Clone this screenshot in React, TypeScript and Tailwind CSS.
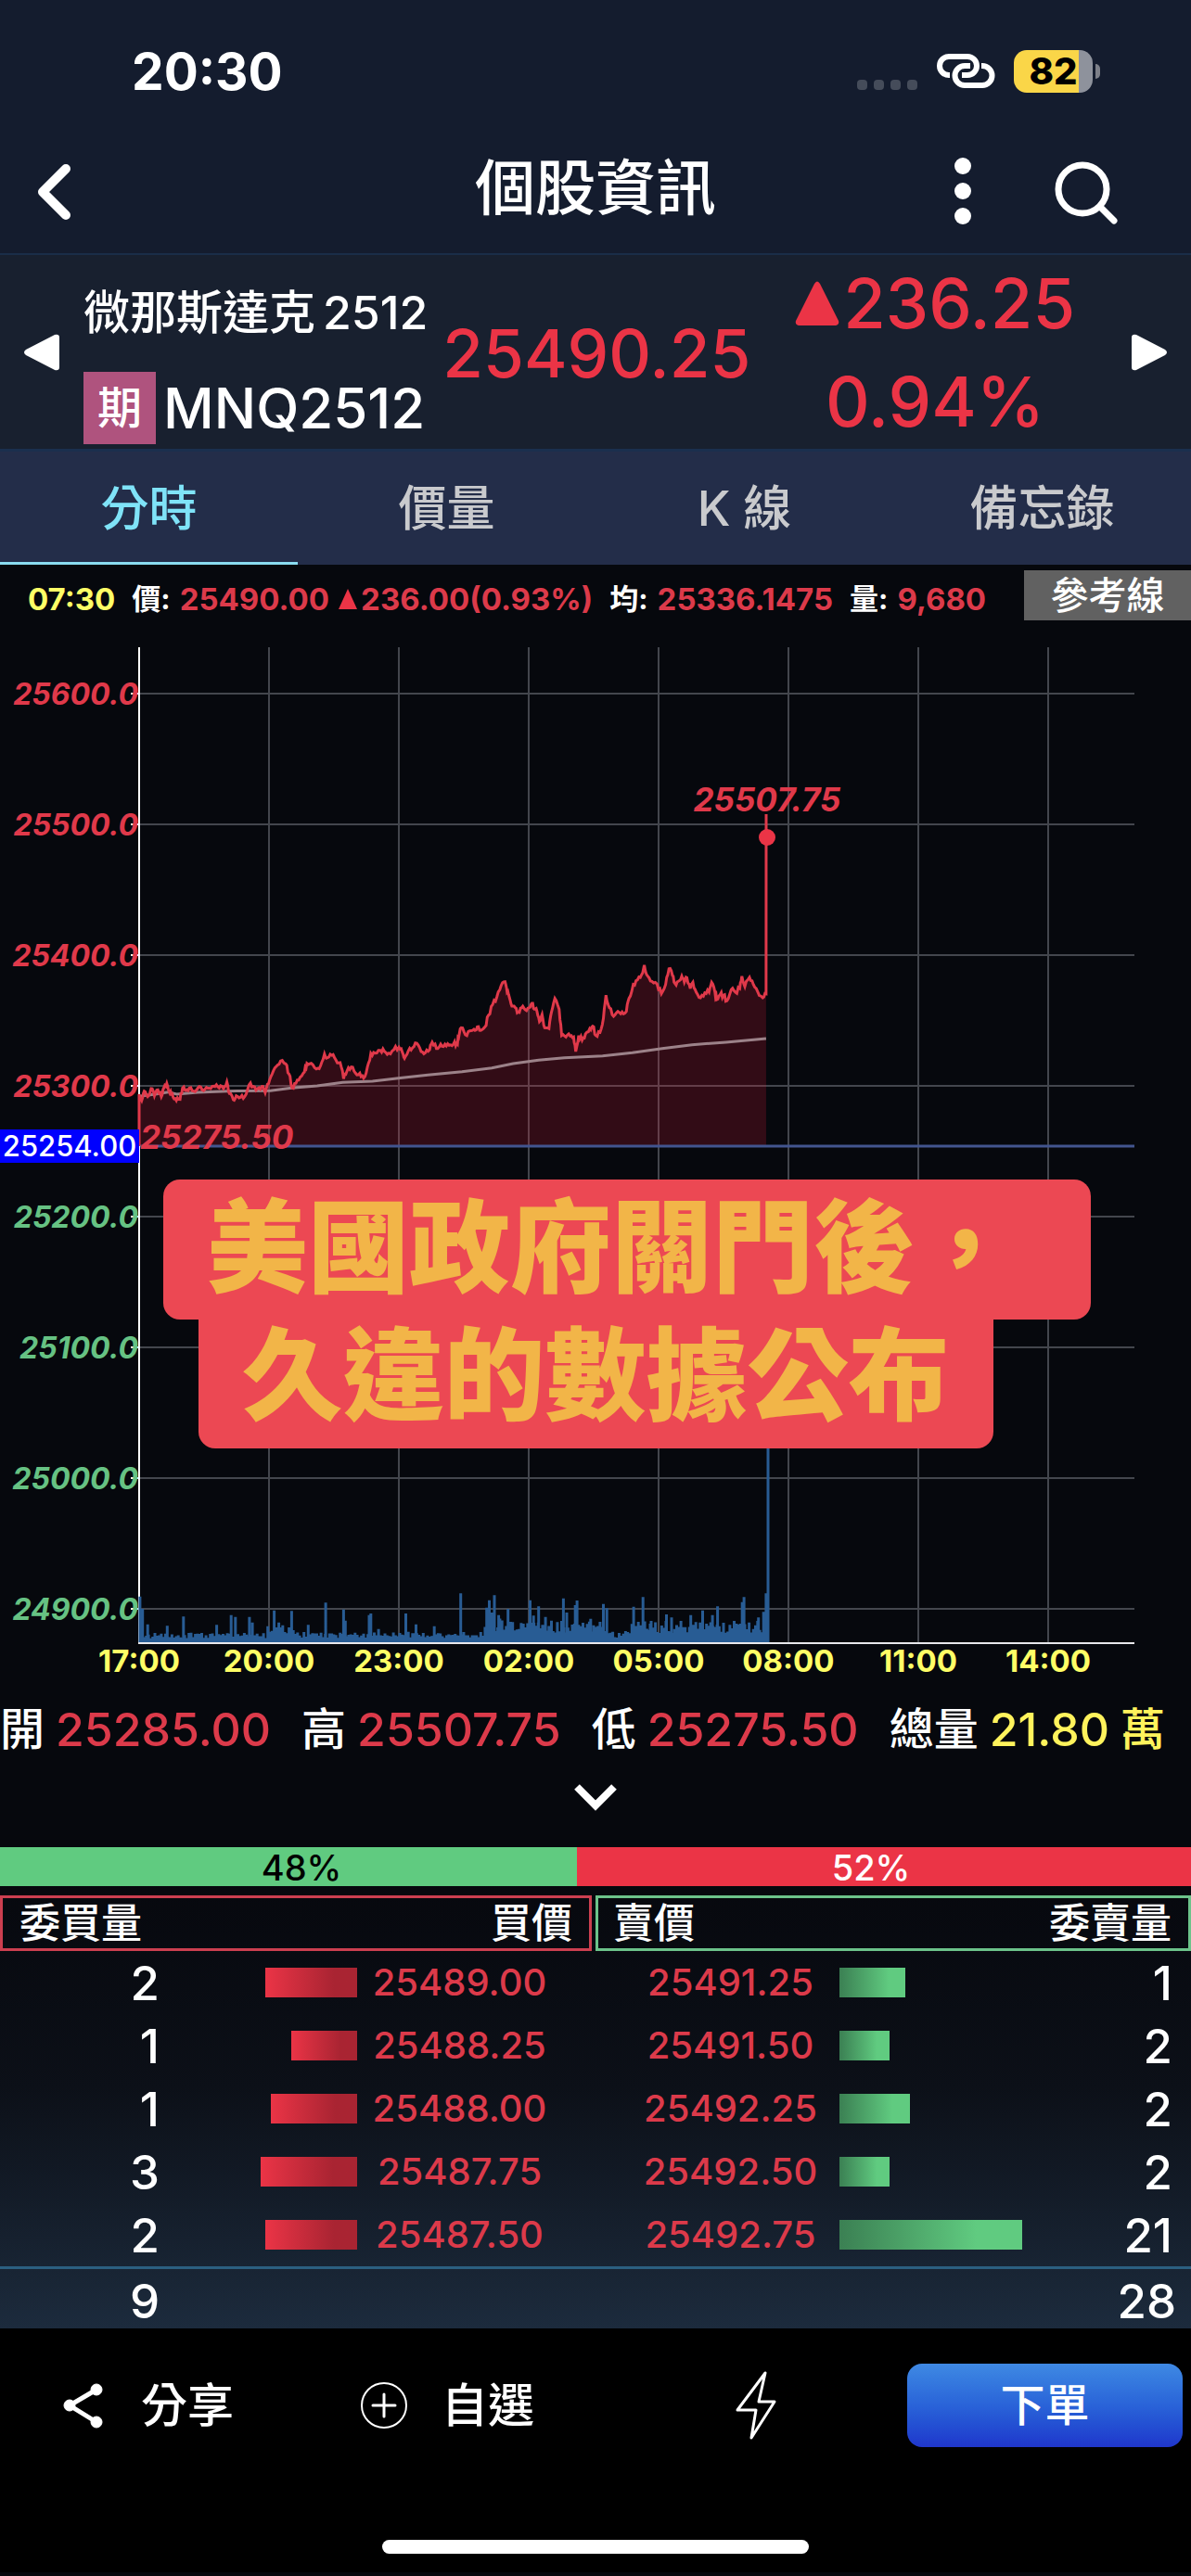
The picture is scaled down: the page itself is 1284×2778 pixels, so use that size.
import type { ReactNode } from "react";

// x: ticks since the open, y: chart level (three per pixel, downwards)
const priceTicks: [number, number][] = [
  [0, 480], [6, 500], [12, 470], [20, 488], [28, 462], [36, 485], [44, 466], [52, 488], [58, 460], [65, 445],
  [70, 470], [76, 480], [82, 495], [90, 492], [96, 497], [102, 460], [110, 468], [118, 460], [128, 470], [138, 460],
  [148, 466], [158, 458], [168, 462], [178, 455], [188, 460], [198, 462], [206, 440], [212, 478], [221, 498], [228, 485],
  [238, 490], [248, 487], [258, 450], [268, 455], [278, 462], [288, 455], [296, 475], [304, 445], [312, 415], [322, 390],
  [332, 373], [344, 382], [352, 415], [359, 460], [368, 445], [378, 425], [388, 408], [394, 380], [404, 380], [416, 398],
  [426, 388], [435, 350], [442, 362], [452, 354], [462, 370], [472, 378], [480, 430], [488, 405], [498, 392], [508, 412],
  [518, 412], [527, 428], [536, 392], [544, 348], [554, 347], [566, 338], [576, 342], [586, 347], [598, 336], [610, 328],
  [618, 345], [623, 364], [632, 340], [642, 330], [652, 315], [662, 342], [672, 346], [682, 336], [688, 312], [698, 332],
  [708, 318], [718, 318], [728, 322], [738, 318], [746, 315], [750, 298], [756, 265], [766, 288], [776, 275], [786, 270],
  [794, 262], [802, 274], [812, 262], [820, 225], [830, 190], [840, 165], [850, 128], [859, 116], [864, 150], [869, 165],
  [875, 195], [883, 200], [890, 214], [898, 200], [906, 206], [916, 200], [922, 186], [928, 205], [934, 212], [940, 245],
  [946, 222], [952, 265], [962, 268], [968, 215], [976, 170], [986, 205], [992, 290], [1002, 295], [1012, 292], [1020, 295],
  [1025, 342], [1032, 290], [1040, 305], [1048, 285], [1058, 268], [1065, 260], [1072, 290], [1082, 280], [1090, 235], [1096, 160],
  [1104, 200], [1114, 228], [1124, 212], [1134, 214], [1144, 212], [1150, 170], [1160, 125], [1170, 110], [1180, 92], [1186, 62],
  [1194, 98], [1204, 115], [1216, 124], [1226, 155], [1236, 125], [1244, 74], [1252, 95], [1258, 122], [1266, 115], [1274, 98],
  [1280, 118], [1286, 103], [1294, 138], [1300, 118], [1308, 150], [1318, 168], [1328, 152], [1338, 150], [1344, 118], [1352, 150],
  [1356, 174], [1364, 158], [1372, 160], [1380, 178], [1390, 142], [1400, 150], [1410, 138], [1415, 98], [1422, 132], [1433, 102],
  [1442, 125], [1452, 148], [1464, 168], [1472, 155],
];

const averageTicks: [number, number][] = [
  [0, 487], [38, 480], [68, 473], [88, 480], [138, 474], [208, 470], [308, 469], [358, 460], [418, 453], [478, 442],
  [548, 438], [618, 427], [678, 418], [758, 407], [828, 395], [878, 381], [938, 370], [998, 362], [1088, 356], [1158, 346],
  [1228, 332], [1298, 320], [1378, 312], [1472, 300],
];

// single busy minutes: [tick, height]
const volumePeaks: [number, number][] = [
  [2, 148], [8, 108], [20, 58], [66, 53], [104, 83], [182, 56], [216, 88], [226, 82], [259, 82], [266, 64],
  [317, 103], [328, 64], [358, 101], [397, 56], [438, 128], [480, 106], [484, 70], [540, 88], [544, 93], [562, 43],
  [626, 93], [650, 58], [693, 52], [755, 158], [816, 112], [822, 136], [828, 96], [834, 152], [844, 88], [866, 108],
  [897, 62], [918, 136], [926, 86], [938, 116], [954, 82], [968, 70], [996, 142], [1004, 96], [1024, 120], [1028, 135],
  [1060, 76], [1090, 124], [1098, 110], [1161, 115], [1183, 146], [1200, 60], [1238, 90], [1250, 80], [1295, 88], [1323, 103],
  [1346, 88], [1358, 116], [1408, 58], [1416, 130], [1420, 146], [1454, 80], [1466, 98], [1472, 158],
];

const AXIS_X = 150;
const BASE_Y = 1771;
const tickX = (t: number) => AXIS_X + t * 0.4592;
const levelY = (l: number) => 1020 + l / 3;
const noise = (n: number) => {
  const v = Math.sin(n * 12.9898) * 43758.5453;
  return v - Math.floor(v);
};

function jagged(points: [number, number][]) {
  const out: string[] = [];
  points.forEach(([t, l], i) => {
    out.push(`${tickX(t).toFixed(1)},${levelY(l).toFixed(1)}`);
    const next = points[i + 1];
    if (!next) return;
    for (const f of [0.33, 0.66]) {
      const x = t + (next[0] - t) * f;
      const y = l + (next[1] - l) * f + (noise(i + f) - 0.5) * 16;
      out.push(`${tickX(x).toFixed(1)},${levelY(y).toFixed(1)}`);
    }
  });
  return out.join(" ");
}

function volumeFloor(t: number) {
  if (t < 300) return 26;
  if (t < 370) return 46;
  if (t < 810) return 28;
  if (t < 890) return 66;
  if (t < 1095) return 58;
  if (t < 1140) return 28;
  return 58;
}

function volumePath() {
  let d = "";
  const bar = (t: number, h: number) => {
    d += `M${tickX(t).toFixed(1)} ${BASE_Y}v-${(h / 3).toFixed(1)}`;
  };
  for (let t = 2; t <= 1472; t += 5) {
    bar(t, volumeFloor(t) * (0.5 + noise(t) * 0.7));
  }
  volumePeaks.forEach(([t, h]) => bar(t, h));
  return d;
}

const priceLine = jagged(priceTicks);
const averageLine = averageTicks.map(([t, l]) => `${tickX(t)},${levelY(l)}`).join(" ");

const yLabels = [
  { y: 748, text: "25600.0", up: true },
  { y: 889, text: "25500.0", up: true },
  { y: 1030, text: "25400.0", up: true },
  { y: 1171, text: "25300.0", up: true },
  { y: 1312, text: "25200.0", up: false },
  { y: 1453, text: "25100.0", up: false },
  { y: 1594, text: "25000.0", up: false },
  { y: 1735, text: "24900.0", up: false },
];

const xLabels = ["17:00", "20:00", "23:00", "02:00", "05:00", "08:00", "11:00", "14:00"];

const tabs = ["分時", "價量", "K 線", "備忘錄"];

const orders = [
  { buyQty: 2, buyBar: 99, buy: "25489.00", sell: "25491.25", sellBar: 71, sellQty: 1 },
  { buyQty: 1, buyBar: 71, buy: "25488.25", sell: "25491.50", sellBar: 54, sellQty: 2 },
  { buyQty: 1, buyBar: 93, buy: "25488.00", sell: "25492.25", sellBar: 76, sellQty: 2 },
  { buyQty: 3, buyBar: 104, buy: "25487.75", sell: "25492.50", sellBar: 54, sellQty: 2 },
  { buyQty: 2, buyBar: 99, buy: "25487.50", sell: "25492.75", sellBar: 197, sellQty: 21 },
];

function StatusBar() {
  return (
    <div className="flex h-[150px] items-center justify-between pt-1 pr-[98px] pl-[142px]">
      <span className="text-[55px] leading-none font-bold">20:30</span>
      <div className="flex items-center">
        <div className="mt-7 mr-5 flex gap-[7px]">
          {[0, 1, 2, 3].map((i) => (
            <span key={i} className="size-[11px] rounded-[4px] bg-[#454c5a]" />
          ))}
        </div>
        <svg width="64" height="42" viewBox="0 0 64 42" fill="none" stroke="#fff" strokeWidth="6" className="mr-5">
          <path d="M15 25h-1a10 10 0 0 1 0-20h20a10 10 0 0 1 0 20h-6" />
          <path d="M49 15h1a10.500 10.500 0 0 1 0 21H31a10.500 10.500 0 0 1 0-21h6" />
        </svg>
        <div className="flex h-[46px] w-[85px] items-center justify-center rounded-[14px] bg-linear-to-r from-[#fad648] from-82% to-[#8e929c] to-82%">
          <span className="text-[40px] leading-[46px] font-extrabold text-black">82</span>
        </div>
        <span className="ml-[3px] h-4 w-[5px] rounded-r-full bg-[#7d8089]" />
      </div>
    </div>
  );
}

function TitleBar() {
  return (
    <header className="grid h-[125px] grid-cols-[1fr_auto_1fr] items-start border-b-2 border-[#1a2d48] px-9">
      <button type="button" aria-label="返回" className="mt-6 justify-self-start">
        <svg width="44" height="66" viewBox="0 0 44 66" fill="none" stroke="#fff" strokeWidth="10" strokeLinecap="round" strokeLinejoin="round">
          <path d="M35 8L10 33l25 25" />
        </svg>
      </button>
      <h1 className="mt-2 text-[65px] leading-[90px] font-medium">個股資訊</h1>
      <div className="mt-[18px] flex items-center gap-[88px] justify-self-end pr-10">
        <button type="button" aria-label="更多">
          <svg width="20" height="76" viewBox="0 0 20 76" fill="#fff">
            <circle cx="10" cy="11" r="9" />
            <circle cx="10" cy="38" r="9" />
            <circle cx="10" cy="65" r="9" />
          </svg>
        </button>
        <button type="button" aria-label="搜尋">
          <svg width="72" height="76" viewBox="0 0 72 76" fill="none" stroke="#fff" strokeWidth="7" strokeLinecap="round">
            <circle cx="31" cy="36" r="26" />
            <path d="M51 56L65 70" />
          </svg>
        </button>
      </div>
    </header>
  );
}

function QuotePanel() {
  return (
    <section className="flex h-[212px] items-center justify-between border-b-3 border-[#1a2f4e] bg-[#18202f] px-[25px]">
      <button type="button" aria-label="上一檔">
        <svg width="40" height="40" viewBox="0 0 40 40" fill="#fff">
          <path d="M3 17L34 1q5-1 5 3v32q0 4-5 3L3 23q-4-3 0-6z" />
        </svg>
      </button>
      <div className="ml-[25px] pt-5">
        <p className="flex items-center gap-2 text-[50px] leading-[72px] font-medium whitespace-nowrap">
          <span>微那斯達克</span>
          <span>2512</span>
        </p>
        <div className="mt-7 flex items-center gap-2">
          <span className="flex size-[78px] items-center justify-center bg-[#af537e] text-[48px] leading-none font-medium">期</span>
          <span className="text-[60px] leading-none font-medium">MNQ2512</span>
        </div>
      </div>
      <p className="ml-4 pt-1 text-[71px] leading-none font-medium text-[#eb3446]">25490.25</p>
      <div className="mx-auto flex flex-col items-center pr-3 text-[74px] leading-[106px] font-medium text-[#eb3446]">
        <p className="flex items-center gap-1">
          <svg width="48" height="48" viewBox="0 0 48 48" fill="#eb3446">
            <path d="M21 3q3-5 6 0l20 40q1 4-3 5H4q-4-1-3-5z" />
          </svg>
          236.25
        </p>
        <p>0.94%</p>
      </div>
      <button type="button" aria-label="下一檔">
        <svg width="40" height="40" viewBox="0 0 40 40" fill="#fff">
          <path d="M37 17L6 1q-5-1-5 3v32q0 4 5 3l31-16q4-3 0-6z" />
        </svg>
      </button>
    </section>
  );
}

function Tabs() {
  return (
    <nav className="grid grid-cols-4 bg-[#232d49]">
      {tabs.map((tab, i) => (
        <button
          key={tab}
          type="button"
          className={`h-[122px] border-b-3 pt-1 text-[52px] leading-none font-medium ${
            i === 0 ? "border-[#8adcf0] text-[#7fe3f8]" : "border-transparent text-[#c9cacd]"
          }`}
        >
          {tab}
        </button>
      ))}
    </nav>
  );
}

function InfoBar() {
  return (
    <div className="flex items-center justify-between pt-[6px] pl-[30px]">
      <p className="flex items-center pt-2 text-[33px] leading-[46px] font-bold whitespace-nowrap text-[#dc3a4a]">
        <span className="mr-[18px] text-[#ffff66]">07:30</span>
        <span className="mr-2.5 text-[31px] text-white">價:</span>
        <span className="mr-2.5">25490.00</span>
        <svg width="20" height="22" viewBox="0 0 20 22" fill="#eb3446" className="mr-1">
          <path d="M10 0l10 22H0z" />
        </svg>
        <span className="mr-[18px]">236.00(0.93%)</span>
        <span className="mr-2.5 text-[31px] text-white">均:</span>
        <span className="mr-[18px]">25336.1475</span>
        <span className="mr-2.5 text-[31px] text-white">量:</span>
        <span>9,680</span>
      </p>
      <button type="button" className="h-[54px] w-[180px] bg-[#616161] text-[41px] leading-none font-medium">
        參考線
      </button>
    </div>
  );
}

function Chart() {
  return (
    <div className="relative">
      <svg viewBox="0 669 1284 1144" className="block w-full">
        <g stroke="#43464d" strokeWidth="2">
          {yLabels.map((l) => (
            <path key={l.text} d={`M150 ${l.y}H1223`} />
          ))}
          {xLabels.slice(1).map((label, i) => (
            <path key={label} d={`M${290 + i * 140} 698V1771`} />
          ))}
        </g>

        <polygon points={`150,1236 ${priceLine} 826,1236`} fill="#e71c3b" fillOpacity="0.2" />
        <path d="M150 1236H1223" stroke="#42558f" strokeWidth="3" />
        <path d="M150 698V1773" stroke="#fff" strokeWidth="2" />
        <path d="M149 1772H1223" stroke="#e8e8ec" strokeWidth="2" />
        <path d={volumePath()} stroke="#285c94" strokeWidth="3" />
        <path d="M828 1771V1440" stroke="#285c94" strokeWidth="3" />

        <polyline points={averageLine} fill="none" stroke="#9c8289" strokeWidth="3" />
        <polyline points={`150,1236 ${priceLine} 826,878`} fill="none" stroke="#e0394a" strokeWidth="3" />
        <circle cx="827" cy="903" r="9" fill="#eb3446" />

        <g fontSize="32" fontWeight="700" fontStyle="italic" textAnchor="end">
          {yLabels.map((l) => (
            <g key={l.text}>
              <path d={`M141 ${l.y}h8`} stroke="#fff" strokeWidth="2" />
              <text x="149" y={l.y + 12} fill={l.up ? "#e0394a" : "#66c283"}>
                {l.text}
              </text>
            </g>
          ))}
        </g>
        <g fontSize="35" fontWeight="700" fontStyle="italic" fill="#e0394a">
          <text x="827" y="875" textAnchor="middle">25507.75</text>
          <text x="151" y="1239">25275.50</text>
        </g>

        <rect x="0" y="1218" width="150" height="36" fill="#0000fe" />
        <text x="75" y="1247" fontSize="31" fontWeight="500" fill="#fff" textAnchor="middle">
          25254.00
        </text>

        <g fontSize="33" fontWeight="700" fill="#ffff66" textAnchor="middle">
          {xLabels.map((label, i) => (
            <text key={label} x={150 + i * 140} y="1803">
              {label}
            </text>
          ))}
        </g>
      </svg>

      <div className="absolute inset-x-0 top-[603px] flex flex-col items-center text-[109px] font-black whitespace-nowrap text-[#f2b548]">
        <p className="ml-[68px] rounded-[18px] bg-[#ec4853] pt-1 pr-[81px] pb-2 pl-[47px] leading-[139px]">美國政府關門後，</p>
        <p className="rounded-b-[18px] bg-[#ec4853] px-[47px] pb-[18px] leading-[121px]">久違的數據公布</p>
      </div>
    </div>
  );
}

function Stat({ label, children }: { label: string; children: ReactNode }) {
  return (
    <div className="flex items-center gap-3">
      <dt className="text-[48px]">{label}</dt>
      <dd className="flex items-center gap-3 text-[#dc3a4a]">{children}</dd>
    </div>
  );
}

function Stats() {
  return (
    <section className="flex flex-col">
      <dl className="flex justify-between pt-4 pr-[28px] text-[50px] leading-[72px] font-medium whitespace-nowrap">
        <Stat label="開">25285.00</Stat>
        <Stat label="高">25507.75</Stat>
        <Stat label="低">25275.50</Stat>
        <Stat label="總量">
          <span className="text-[#fff35c]">21.80</span>
          <span className="text-[48px] text-[#fff35c]">萬</span>
        </Stat>
      </dl>
      <button type="button" aria-label="展開" className="mt-5 mb-[37px] self-center">
        <svg width="50" height="34" viewBox="0 0 50 34" fill="none" stroke="#fff" strokeWidth="8">
          <path d="M5 6l20 20L45 6" />
        </svg>
      </button>
    </section>
  );
}

function OrderBook() {
  return (
    <section className="bg-linear-to-b from-[#06070c] via-[#0c1018] via-50% to-[#1c2b3d]">
      <div className="flex h-[42px] text-center text-[38px] leading-[44px] font-medium">
        <div className="w-[622px] bg-[#60cb80] pl-7 text-black">48%</div>
        <div className="flex-1 bg-[#eb3446] pr-7">52%</div>
      </div>
      <table className="mt-[10px] w-full table-fixed border-separate border-spacing-0">
        <colgroup>
          <col className="w-[172px]" />
          <col />
          <col className="w-[253px]" />
          <col className="w-1" />
          <col className="w-[263px]" />
          <col />
          <col className="w-[166px]" />
        </colgroup>
        <thead className="text-[44px] leading-[54px]">
          <tr>
            <th colSpan={2} className="border-y-3 border-l-3 border-[#cc3f50] p-0 pl-[18px] text-left font-medium">委買量</th>
            <th className="border-y-3 border-r-3 border-[#cc3f50] p-0 pr-[18px] text-right font-medium">買價</th>
            <td />
            <th className="border-y-3 border-l-3 border-[#6cc38a] p-0 pl-4 text-left font-medium">賣價</th>
            <th colSpan={2} className="border-y-3 border-r-3 border-[#6cc38a] p-0 pr-[18px] text-right font-medium">委賣量</th>
          </tr>
        </thead>
        <tbody>
          {orders.map((o) => (
            <tr key={o.buy} className="h-[68px]">
              <td className="p-0 text-right text-[51px] leading-none font-medium">{o.buyQty}</td>
              <td className="p-0">
                <div className="ml-auto h-8 bg-linear-to-r from-[#eb3446] to-[#a92432] to-75%" style={{ width: o.buyBar }} />
              </td>
              <td className="p-0 pr-8 text-center text-[40px] leading-none font-medium text-[#dc3a4a]">{o.buy}</td>
              <td />
              <td className="p-0 pl-7 text-center text-[40px] leading-none font-medium text-[#dc3a4a]">{o.sell}</td>
              <td className="p-0">
                <div className="h-8 bg-linear-to-r from-[#3b8053] to-[#60cb80] to-75%" style={{ width: o.sellBar }} />
              </td>
              <td className="p-0 pr-5 text-right text-[51px] leading-none font-medium">{o.sellQty}</td>
            </tr>
          ))}
        </tbody>
        <tfoot>
          <tr className="h-[67px] text-right text-[51px] leading-none font-medium">
            <td className="border-t-3 border-[#2b5f80] p-0 pt-1">9</td>
            <td colSpan={5} className="border-t-3 border-[#2b5f80] p-0" />
            <td className="border-t-3 border-[#2b5f80] p-0 pt-1 pr-4">28</td>
          </tr>
        </tfoot>
      </table>
    </section>
  );
}

function BottomBar() {
  return (
    <footer className="flex flex-col items-center bg-black pt-[38px] pb-5">
      <div className="flex w-full items-center justify-between pr-[9px] pl-[66px] text-[50px] leading-none font-medium">
        <button type="button" className="flex items-center gap-9">
          <svg width="50" height="52" viewBox="0 0 50 52" fill="#fff" stroke="#fff">
            <path d="M38 9L9 26l29 18" fill="none" strokeWidth="5" />
            <circle cx="38" cy="9" r="6" />
            <circle cx="9" cy="26" r="6" />
            <circle cx="38" cy="44" r="6" />
          </svg>
          分享
        </button>
        <button type="button" className="flex items-center gap-9">
          <svg width="52" height="52" viewBox="0 0 52 52" fill="none" stroke="#fff" strokeWidth="2">
            <circle cx="26" cy="26" r="24" />
            <path d="M26 14v24M14 26h24" strokeWidth="3" strokeLinecap="round" />
          </svg>
          自選
        </button>
        <button type="button" aria-label="閃電下單" className="mr-1 ml-[80px]">
          <svg width="46" height="76" viewBox="0 0 46 76" fill="none" stroke="#fff" strokeWidth="3" strokeLinejoin="round">
            <path d="M33 3L3 43h20L18 73 43 34H26z" />
          </svg>
        </button>
        <button type="button" className="h-[90px] w-[297px] rounded-[16px] bg-linear-to-b from-[#3f89e3] to-[#2036cc] text-[48px]">
          下單
        </button>
      </div>
      <div className="mt-[100px] h-[15px] w-[460px] rounded-full bg-white" />
    </footer>
  );
}

export default function App() {
  return (
    <main className="min-h-screen bg-[#06080d] font-[Inter,'Noto_Sans_CJK_TC',sans-serif] text-white">
      <div className="bg-[#141c2e]">
        <StatusBar />
        <TitleBar />
      </div>
      <QuotePanel />
      <Tabs />
      <InfoBar />
      <Chart />
      <Stats />
      <OrderBook />
      <BottomBar />
    </main>
  );
}
